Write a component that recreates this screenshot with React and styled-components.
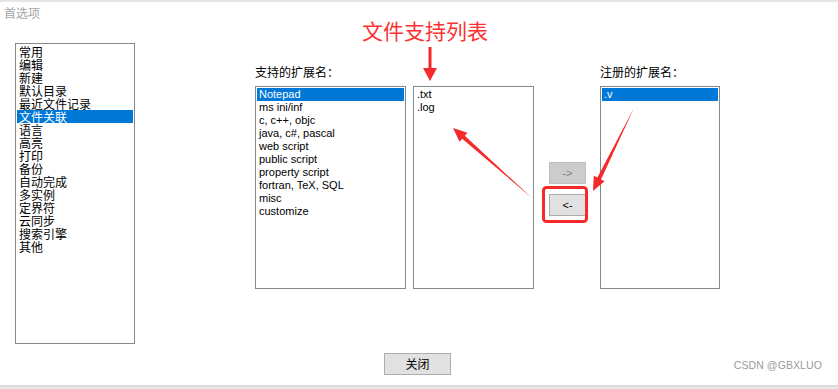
import React from "react";
import styled, { createGlobalStyle } from "styled-components";

const Global = createGlobalStyle`
  html, body { margin: 0; padding: 0; background: #fff; }
  body { font-family: "Liberation Sans", "Noto Sans CJK SC", sans-serif; }
`;

const Window = styled.div`
  position: relative;
  width: 838px;
  height: 389px;
  display: flex;
  flex-direction: column;
  background: #fff;
  overflow: hidden;
`;

const TopEdge = styled.div`
  height: 2px;
  background: #e6e6e6;
`;

const Title = styled.div`
  margin-top: 3px;
  padding-left: 4px;
  height: 16px;
  line-height: 16px;
  font-family: "Noto Sans CJK SC", sans-serif;
  font-size: 12px;
  color: #a5a5a5;
`;

const Body = styled.div`
  display: flex;
  align-items: flex-start;
  margin-top: 22px;
  padding-left: 15px;
`;

const ListBox = styled.div`
  box-sizing: border-box;
  width: ${(p) => p.$w}px;
  height: ${(p) => p.$h}px;
  border: 1px solid #828790;
  padding: 1px 1px 0 1px;
  background: #fff;
  display: flex;
  flex-direction: column;
  margin-top: ${(p) => p.$top || 0}px;
  margin-left: ${(p) => p.$left || 0}px;
`;

const Item = styled.div`
  height: 13px;
  line-height: 13px;
  padding-left: ${(p) => (p.$cjk ? 2 : 2)}px;
  font-family: ${(p) =>
    p.$cjk ? `"Noto Sans CJK SC", sans-serif` : `"Liberation Sans", sans-serif`};
  font-size: ${(p) => (p.$cjk ? 12 : 11)}px;
  white-space: nowrap;
  color: ${(p) => (p.$sel ? "#fff" : "#000")};
  background: ${(p) => (p.$sel ? "#0078d7" : "transparent")};
`;

const Column = styled.div`
  display: flex;
  flex-direction: column;
  margin-left: ${(p) => p.$left}px;
  margin-top: 21px;
`;

const Label = styled.div`
  height: 16px;
  line-height: 16px;
  font-family: "Noto Sans CJK SC", sans-serif;
  font-size: 12px;
  color: #000;
  margin-bottom: 6px;
`;

const ButtonStack = styled.div`
  display: flex;
  flex-direction: column;
  gap: 10px;
  margin-left: 15px;
  margin-top: 119px;
`;

const Btn = styled.button`
  box-sizing: border-box;
  width: ${(p) => p.$w || 37}px;
  height: 22px;
  padding: 0;
  margin: 0;
  border: 1px solid ${(p) => (p.disabled ? "#bfbfbf" : "#adadad")};
  background: ${(p) => (p.disabled ? "#cccccc" : "#e1e1e1")};
  color: ${(p) => (p.disabled ? "#838383" : "#000")};
  font-family: ${(p) =>
    p.$cjk ? `"Noto Sans CJK SC", sans-serif` : `"Liberation Sans", sans-serif`};
  font-size: ${(p) => (p.$cjk ? 12 : 11)}px;
  line-height: 20px;
`;

const Footer = styled.div`
  display: flex;
  justify-content: center;
  padding-right: 3px;
  margin-top: 9px;
`;

const BottomShadow = styled.div`
  margin-top: auto;
  height: 4px;
  background: linear-gradient(#d6d6d6, #ececec);
`;

const Watermark = styled.div`
  position: absolute;
  right: 16px;
  bottom: 18px;
  font-family: "Liberation Sans", sans-serif;
  font-size: 10.5px;
  color: #9a9a9a;
  letter-spacing: 0.1px;
`;

const Annotation = styled.div`
  position: absolute;
  left: 362px;
  top: 18px;
  font-family: "Noto Sans CJK SC", sans-serif;
  font-size: 21px;
  line-height: 24px;
  color: #fb3232;
  pointer-events: none;
`;

const Overlay = styled.svg`
  position: absolute;
  left: 0;
  top: 0;
  pointer-events: none;
`;

const categories = [
  "常用", "编辑", "新建", "默认目录", "最近文件记录", "文件关联", "语言", "高亮",
  "打印", "备份", "自动完成", "多实例", "定界符", "云同步", "搜索引擎", "其他",
];

const types = [
  "Notepad", "ms ini/inf", "c, c++, objc", "java, c#, pascal", "web script",
  "public script", "property script", "fortran, TeX, SQL", "misc", "customize",
];

const RED = "#f62a2a";

export default function App() {
  return (
    <Window>
      <Global />
      <TopEdge />
      <Title>首选项</Title>
      <Body>
        <ListBox $w={120} $h={301}>
          {categories.map((c, i) => (
            <Item key={c} $cjk $sel={i === 5}>{c}</Item>
          ))}
        </ListBox>
        <Column $left={120}>
          <Label>支持的扩展名：</Label>
          <ListBox $w={151} $h={203}>
            {types.map((t, i) => (
              <Item key={t} $sel={i === 0}>{t}</Item>
            ))}
          </ListBox>
        </Column>
        <ListBox $w={121} $h={203} $top={43} $left={7}>
          <Item>.txt</Item>
          <Item>.log</Item>
        </ListBox>
        <ButtonStack>
          <Btn disabled>-&gt;</Btn>
          <Btn>&lt;-</Btn>
        </ButtonStack>
        <Column $left={14}>
          <Label>注册的扩展名：</Label>
          <ListBox $w={120} $h={203}>
            <Item $sel>.v</Item>
          </ListBox>
        </Column>
      </Body>
      <Footer>
        <Btn $w={67} $cjk>关闭</Btn>
      </Footer>
      <BottomShadow />
      <Watermark>CSDN @GBXLUO</Watermark>
      <Annotation>文件支持列表</Annotation>
      <Overlay width="838" height="389" viewBox="0 0 838 389">
        <rect x="543.5" y="187.5" width="43" height="34" rx="3" fill="none" stroke={RED} strokeWidth="3" />
        <rect x="428.5" y="47" width="3" height="22" fill={RED} />
        <polygon points="423,68 437,68 430,81" fill={RED} />
        <polygon
          points="532,198 464.8,135.8 467.5,132.8 453,128 459.5,141.8 462.2,138.8"
          fill={RED}
        />
        <polygon
          points="634,108 601,179.4 604.6,181.2 593,191 593.8,175.8 597.4,177.6"
          fill={RED}
        />
      </Overlay>
    </Window>
  );
}
